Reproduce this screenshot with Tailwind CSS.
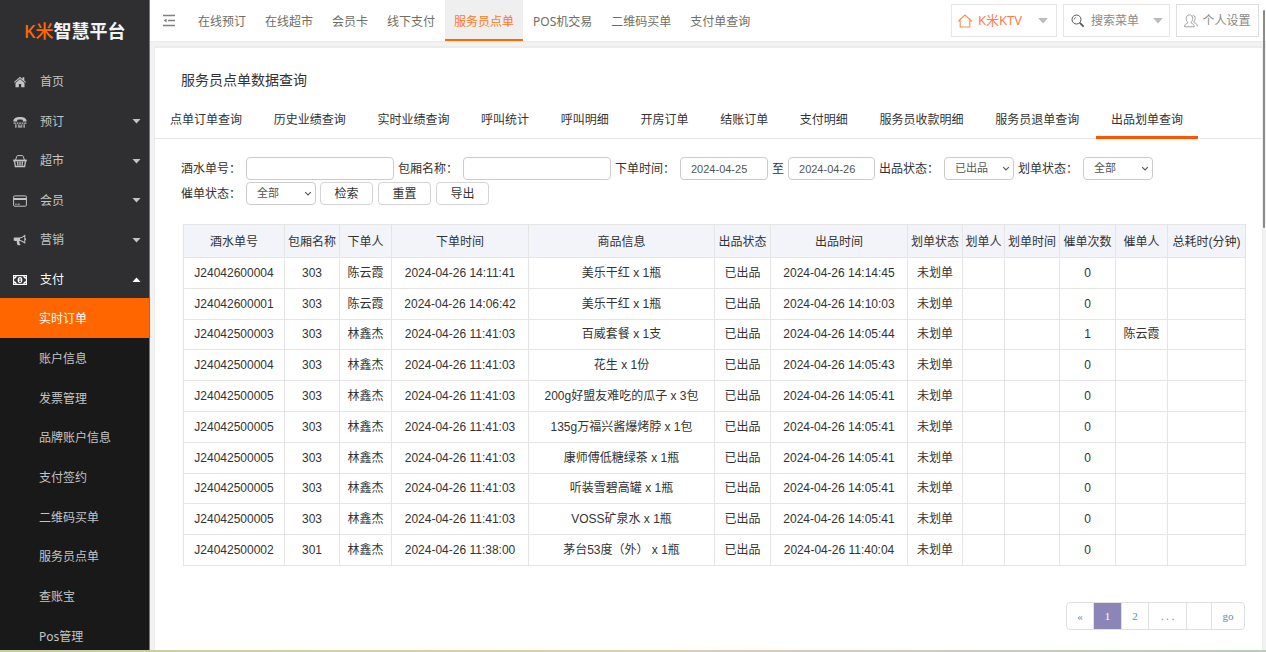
<!DOCTYPE html>
<html lang="zh-CN">
<head>
<meta charset="utf-8">
<title>K米智慧平台</title>
<script src="https://cdn.jsdelivr.net/npm/@tailwindcss/browser@4"></script>
</head>
<body class="flex h-screen flex-col overflow-hidden bg-[#f2f2f2] font-['Noto_Sans','Noto_Sans_CJK_SC',sans-serif] text-xs text-[#333]">
<svg class="hidden" aria-hidden="true">
  <symbol id="down" viewBox="0 0 8 5"><path d="M0 0h8L4 4.6z" fill="currentColor"/></symbol>
  <symbol id="chev" viewBox="0 0 8 6"><path d="M1.2 1.2L4 4l2.800-2.800" fill="none" stroke="#555" stroke-width="1.100"/></symbol>
</svg>
<div class="flex min-h-0 flex-1">
  <aside class="flex w-[150px] shrink-0 flex-col overflow-hidden border-r border-[#777] bg-[#2f2f31] text-[#c4c4c4]">
    <h1 class="flex h-[61px] shrink-0 items-center pl-6 text-lg font-bold text-[#f4f4f4]"><span class="font-medium text-[#ff6a00]">K米</span>智慧平台</h1>
    <nav class="shrink-0">
      <div class="grid h-[237px] grid-rows-6">
        <a href="#" class="flex items-center pt-[3px] pr-2 pl-[13px]"><svg class="mr-[13px] h-3.5 w-3.5" viewBox="0 0 14 14" fill="currentColor"><path d="M7 1.800L1 7l.7.8L7 3.300l5.300 4.500.7-.8-1.700-1.500V2.300H9.500v1.600z"/><path d="M2.500 7.900L7 4.100l4.500 3.800v4.300H8.200V9H5.800v3.200H2.500z"/></svg>首页</a>
        <a href="#" class="flex items-center pt-[3px] pr-2 pl-[13px]"><svg class="mr-[13px] h-3.5 w-3.5" viewBox="0 0 14 14" fill="currentColor"><path d="M.4 6.600C.2 3.200 3.300 1.900 7 1.900s6.800 1.300 6.600 4.700H9.800V5c-1.500-.6-4.100-.6-5.600 0v1.600z"/><path d="M.6 7.600h2.200v1.200H.6zM3.700 7.600h1.700v1.200H3.700zM6.200 7.600h1.700v1.200H6.200zM8.700 7.600h1.700v1.200H8.700zM11.200 7.600h2.200v1.200h-2.200zM2 9.500h1.700v1.200H2zM4.900 9.500h1.700v1.200H4.900zM7.600 9.500h1.700v1.200H7.600zM10.300 9.500H12v1.200h-1.700zM2 11.300h1.700v1.200H2zM4.900 11.300h4.400v1.200H4.900zM10.300 11.300H12v1.200h-1.700z"/></svg>预订<svg class="ml-auto h-[5px] w-[9px]"><use href="#down"/></svg></a>
        <a href="#" class="flex items-center pt-[3px] pr-2 pl-[13px]"><svg class="mr-[13px] h-3.5 w-3.5" viewBox="0 0 14 14" fill="none" stroke="currentColor"><path d="M2.600 6l1.100-3.600q.3-.8 1.200-.8h4.200q.9 0 1.200.8L11.400 6" /><path d="M.2 6.500h13.600" stroke-width="1.800"/><path d="M1.500 7l.9 5.500h9.200l.9-5.500M4.600 7.500l.3 4M7 7.500v4M9.400 7.500l-.3 4" stroke-width="1.300"/></svg>超市<svg class="ml-auto h-[5px] w-[9px]"><use href="#down"/></svg></a>
        <a href="#" class="flex items-center pt-[3px] pr-2 pl-[13px]"><svg class="mr-[13px] h-3.5 w-3.5" viewBox="0 0 14 14" fill="none" stroke="currentColor"><rect x=".6" y="1.900" width="12.800" height="10.300" rx="1"/><path d="M.6 5h12.800" stroke-width="2"/><path d="M2.200 10.200h1.500M4.500 10.200h2.300"/></svg>会员<svg class="ml-auto h-[5px] w-[9px]"><use href="#down"/></svg></a>
        <a href="#" class="flex items-center pt-[3px] pr-2 pl-[13px]"><svg class="mr-[13px] h-3.5 w-3.5" viewBox="0 0 14 14" fill="currentColor"><path fill-rule="evenodd" d="M1.700 4.500H6c2.200 0 4.200-1.200 5.800-2.700h.5v3.400c1.100.2 1.100 1.800 0 2v3.400h-.5C10.200 9.200 8.500 8.200 6.500 7.900c-.5.8-.1 1.400.2 1.900-.5.7.2 1.200.9 1.700-.7 1.100-2.700 1-3.200.3C4.100 10.600 3.500 9.300 3.900 7.900H1.700C.9 7.900.7 7.500.7 7V5.500c0-.6.4-1 1-1zM11.300 3.400C9.900 4.500 8.400 5.200 7 5.400v1.700c1.500.2 3 .9 4.300 2z"/></svg>营销<svg class="ml-auto h-[5px] w-[9px]"><use href="#down"/></svg></a>
        <a href="#" class="flex items-center pt-[3px] pr-2 pl-[13px] text-white"><svg class="mr-[13px] h-3.5 w-3.5" viewBox="0 0 14 14" fill="none" stroke="currentColor"><rect x=".6" y="2.600" width="12.800" height="8.800" stroke-width="1.200"/><path d="M1 5q2 0 2-2M13 5q-2 0-2-2M1 9q2 0 2 2M13 9q-2 0-2 2" stroke-width="1.300"/><ellipse cx="7" cy="7" rx="2.400" ry="2.900" fill="currentColor" stroke="none"/><path d="M6.300 5.900l.8-.4v2.700M6.100 8.500h2" stroke="#2f2f31" stroke-width=".8"/></svg>支付<svg class="ml-auto h-[5px] w-[9px] rotate-180"><use href="#down"/></svg></a>
      </div>
      <div class="grid h-[357px] grid-rows-9 bg-[#19191a]">
        <a href="#" class="flex items-center bg-[#ff6600] pt-[3px] pl-[39px] text-white">实时订单</a>
        <a href="#" class="flex items-center pt-[3px] pl-[39px]">账户信息</a>
        <a href="#" class="flex items-center pt-[3px] pl-[39px]">发票管理</a>
        <a href="#" class="flex items-center pt-[3px] pl-[39px]">品牌账户信息</a>
        <a href="#" class="flex items-center pt-[3px] pl-[39px]">支付签约</a>
        <a href="#" class="flex items-center pt-[3px] pl-[39px]">二维码买单</a>
        <a href="#" class="flex items-center pt-[3px] pl-[39px]">服务员点单</a>
        <a href="#" class="flex items-center pt-[3px] pl-[39px]">查账宝</a>
        <a href="#" class="flex items-center pt-[3px] pl-[39px]">Pos管理</a>
      </div>
    </nav>
  </aside>

  <div class="flex min-w-0 flex-1 flex-col">
    <header class="flex h-[42px] shrink-0 border-b border-[#eaeaea] bg-white pr-[7px] text-[#6e6e62]">
      <button class="w-[39px] pl-3" aria-label="收起菜单"><svg class="h-3.5 w-3.5" viewBox="0 0 14 14" fill="none" stroke="#808080" stroke-width="1.300"><path d="M1 1.500h12M6 6.500h7M1 11.500h12"/><path d="M4.600 4.500L1.600 6.500l3 2z" fill="#808080" stroke="none"/></svg></button>
      <nav class="flex h-[41px] gap-px leading-[43px] whitespace-nowrap">
        <a href="#" class="px-[9px]">在线预订</a>
        <a href="#" class="px-[9px]">在线超市</a>
        <a href="#" class="px-[9px]">会员卡</a>
        <a href="#" class="px-[9px]">线下支付</a>
        <a href="#" class="h-[41px] border-b-2 border-[#ff6600] bg-[#efefef] px-[9px] text-[#ff7a1a]">服务员点单</a>
        <a href="#" class="px-[9px]">POS机交易</a>
        <a href="#" class="px-[9px]">二维码买单</a>
        <a href="#" class="px-[9px]">支付单查询</a>
      </nav>
      <div class="ml-auto flex h-[33px] gap-1.5 self-center whitespace-nowrap text-[#8a8a8a]">
        <button class="flex w-[106px] items-center border border-[#e6e6e6] pr-2 pl-1.5 text-[#ff7c50]"><svg class="mr-1.5 h-3.5 w-3.5" viewBox="0 0 14 14" fill="none" stroke="#ff8c4a" stroke-width="1.100"><path d="M.6 7L7 1l6.400 6h-1.600v6H2.200V7z"/></svg><span class="text-[13px]">K米KTV</span><svg class="ml-auto h-1.5 w-2.5 text-[#bbb]"><use href="#down"/></svg></button>
        <label class="flex w-[107px] items-center border border-[#e6e6e6] pr-1.5 pl-[7px]"><svg class="mr-1.5 h-3.5 w-3.5 shrink-0" viewBox="0 0 14 14" fill="none" stroke="#555"><circle cx="5.500" cy="5.500" r="4.500"/><path d="M3.200 5.500q.2-2 2-2.300" stroke-width=".7"/><path d="M8.900 8.900l3.700 3.700" stroke-width="1.700"/></svg><input class="w-0 min-w-0 flex-1 outline-none placeholder:text-[#8a8a8a]" placeholder="搜索菜单" aria-label="搜索菜单"><svg class="ml-2 h-1.5 w-2.5 text-[#bbb]"><use href="#down"/></svg></label>
        <button class="flex w-[83px] items-center justify-center gap-1 border border-[#dedede]"><svg class="h-3.5 w-3.5" viewBox="0 0 14 14" fill="none" stroke="#999" stroke-width=".9"><path d="M.5 12.800c0-2.400 1.400-3 3.100-3.700V8.200C2.600 7.200 2.200 5.800 2.200 4.300 2.200 2.300 3.500.8 5.400.8s3.200 1.500 3.200 3.500c0 1.500-.4 2.900-1.400 3.900v.9c1.700.7 3.100 1.300 3.100 3.700z"/><path d="M8.500 1.200c1.700 0 2.700 1.200 2.700 3 0 1.300-.4 2.500-1.300 3.500v.8c1.800.7 3.500 1.300 3.500 3.900"/></svg>个人设置</button>
      </div>
    </header>

    <main class="mt-1 mr-[3px] ml-1 min-h-0 flex-1 border-t-2 border-r border-l border-[#ececec] bg-white">
      <h2 class="pt-5 pl-[26px] text-sm leading-6">服务员点单数据查询</h2>
      <nav class="mt-2 flex h-[39px] justify-between border-b border-[#e6e6e6] pr-16 leading-10 whitespace-nowrap">
        <a href="#" class="px-[15px]">点单订单查询</a>
        <a href="#" class="px-[15px]">历史业绩查询</a>
        <a href="#" class="px-[15px]">实时业绩查询</a>
        <a href="#" class="px-[15px]">呼叫统计</a>
        <a href="#" class="px-[15px]">呼叫明细</a>
        <a href="#" class="px-[15px]">开房订单</a>
        <a href="#" class="px-[15px]">结账订单</a>
        <a href="#" class="px-[15px]">支付明细</a>
        <a href="#" class="px-[15px]">服务员收款明细</a>
        <a href="#" class="px-[15px]">服务员退单查询</a>
        <a href="#" class="h-[39px] border-b-[3px] border-[#ff5500] px-[15px]">出品划单查询</a>
      </nav>
      <form class="mt-[18px] flex flex-wrap items-center gap-x-1 gap-y-px pl-[26px] font-['Liberation_Sans','Noto_Sans_CJK_SC',sans-serif] whitespace-nowrap">
        <label for="no" class="w-[61px]">酒水单号：</label>
        <input id="no" class="h-[23px] w-[148px] rounded border border-[#ccc] px-2">
        <label for="room" class="w-[61px]">包厢名称：</label>
        <input id="room" class="h-[23px] w-[148px] rounded border border-[#ccc] px-2">
        <label for="from" class="w-[61px]">下单时间：</label>
        <input id="from" value="2024-04-25" class="h-[23px] w-[88px] rounded border border-[#ccc] px-2.5 text-[11px] text-[#555]">
        <label for="to">至</label>
        <input id="to" value="2024-04-26" class="h-[23px] w-[87px] rounded border border-[#ccc] px-2.5 text-[11px] text-[#555]">
        <label for="out" class="w-[61px]">出品状态：</label>
        <span class="grid h-[23px] w-[70px] items-center"><select id="out" class="col-start-1 row-start-1 h-full appearance-none rounded border border-[#ccc] pl-2.5 text-[11px] text-[#555]"><option>已出品</option></select><svg class="pointer-events-none col-start-1 row-start-1 mr-1 h-1.5 w-2 justify-self-end"><use href="#chev"/></svg></span>
        <label for="mark" class="w-[61px]">划单状态：</label>
        <span class="grid h-[23px] w-[70px] items-center"><select id="mark" class="col-start-1 row-start-1 h-full appearance-none rounded border border-[#ccc] pl-2.5 text-[11px] text-[#555]"><option>全部</option></select><svg class="pointer-events-none col-start-1 row-start-1 mr-1 h-1.5 w-2 justify-self-end"><use href="#chev"/></svg></span>
        <span class="basis-full"></span>
        <label for="urge" class="w-[61px]">催单状态：</label>
        <span class="grid h-[23px] w-[70px] items-center"><select id="urge" class="col-start-1 row-start-1 h-full appearance-none rounded border border-[#ccc] pl-2.5 text-[11px] text-[#555]"><option>全部</option></select><svg class="pointer-events-none col-start-1 row-start-1 mr-1 h-1.5 w-2 justify-self-end"><use href="#chev"/></svg></span>
        <button type="button" class="mr-px h-[23px] w-[53px] rounded border border-[#d4d4d4]">检索</button>
        <button type="button" class="mr-px h-[23px] w-[53px] rounded border border-[#d4d4d4]">重置</button>
        <button type="button" class="h-[23px] w-[53px] rounded border border-[#d4d4d4]">导出</button>
      </form>
      <div class="mt-[19px] pr-[17px] pl-7">
        <table class="h-[342px] w-full table-fixed border-collapse text-center font-['Liberation_Sans','Noto_Sans_CJK_SC',sans-serif] whitespace-nowrap [&_td]:border [&_td]:border-[#e5e5e5] [&_th]:border [&_th]:border-[#e5e5e5] [&_th]:pt-0.5 [&_th]:font-normal">
          <colgroup><col class="w-[101px]"><col class="w-[55px]"><col class="w-[52px]"><col class="w-[137px]"><col class="w-[186px]"><col class="w-[56px]"><col class="w-[137px]"><col class="w-[55px]"><col class="w-[42px]"><col class="w-[55px]"><col class="w-[56px]"><col class="w-[52px]"><col class="w-[78px]"></colgroup>
          <thead class="bg-[#f3f4f9]"><tr class="h-[33px]"><th>酒水单号</th><th>包厢名称</th><th>下单人</th><th>下单时间</th><th>商品信息</th><th>出品状态</th><th>出品时间</th><th>划单状态</th><th>划单人</th><th>划单时间</th><th>催单次数</th><th>催单人</th><th>总耗时(分钟)</th></tr></thead>
          <tbody>
            <tr><td>J24042600004</td><td>303</td><td>陈云霞</td><td>2024-04-26 14:11:41</td><td>美乐干红 x 1瓶</td><td>已出品</td><td>2024-04-26 14:14:45</td><td>未划单</td><td></td><td></td><td>0</td><td></td><td></td></tr>
            <tr><td>J24042600001</td><td>303</td><td>陈云霞</td><td>2024-04-26 14:06:42</td><td>美乐干红 x 1瓶</td><td>已出品</td><td>2024-04-26 14:10:03</td><td>未划单</td><td></td><td></td><td>0</td><td></td><td></td></tr>
            <tr><td>J24042500003</td><td>303</td><td>林鑫杰</td><td>2024-04-26 11:41:03</td><td>百威套餐 x 1支</td><td>已出品</td><td>2024-04-26 14:05:44</td><td>未划单</td><td></td><td></td><td>1</td><td>陈云霞</td><td></td></tr>
            <tr><td>J24042500004</td><td>303</td><td>林鑫杰</td><td>2024-04-26 11:41:03</td><td>花生 x 1份</td><td>已出品</td><td>2024-04-26 14:05:43</td><td>未划单</td><td></td><td></td><td>0</td><td></td><td></td></tr>
            <tr><td>J24042500005</td><td>303</td><td>林鑫杰</td><td>2024-04-26 11:41:03</td><td>200g好盟友难吃的瓜子 x 3包</td><td>已出品</td><td>2024-04-26 14:05:41</td><td>未划单</td><td></td><td></td><td>0</td><td></td><td></td></tr>
            <tr><td>J24042500005</td><td>303</td><td>林鑫杰</td><td>2024-04-26 11:41:03</td><td>135g万福兴酱爆烤脖 x 1包</td><td>已出品</td><td>2024-04-26 14:05:41</td><td>未划单</td><td></td><td></td><td>0</td><td></td><td></td></tr>
            <tr><td>J24042500005</td><td>303</td><td>林鑫杰</td><td>2024-04-26 11:41:03</td><td>康师傅低糖绿茶 x 1瓶</td><td>已出品</td><td>2024-04-26 14:05:41</td><td>未划单</td><td></td><td></td><td>0</td><td></td><td></td></tr>
            <tr><td>J24042500005</td><td>303</td><td>林鑫杰</td><td>2024-04-26 11:41:03</td><td>听装雪碧高罐 x 1瓶</td><td>已出品</td><td>2024-04-26 14:05:41</td><td>未划单</td><td></td><td></td><td>0</td><td></td><td></td></tr>
            <tr><td>J24042500005</td><td>303</td><td>林鑫杰</td><td>2024-04-26 11:41:03</td><td>VOSS矿泉水 x 1瓶</td><td>已出品</td><td>2024-04-26 14:05:41</td><td>未划单</td><td></td><td></td><td>0</td><td></td><td></td></tr>
            <tr><td>J24042500002</td><td>301</td><td>林鑫杰</td><td>2024-04-26 11:38:00</td><td>茅台53度（外） x 1瓶</td><td>已出品</td><td>2024-04-26 11:40:04</td><td>未划单</td><td></td><td></td><td>0</td><td></td><td></td></tr>
          </tbody>
        </table>
      </div>
      <nav class="mt-9 mr-[17px] ml-auto flex h-7 w-max divide-x divide-[#e0e0e0] overflow-hidden rounded border border-[#e0e0e0] text-center font-['Liberation_Serif',serif] text-[11px] leading-[27px] text-[#5590c4]" aria-label="分页">
        <a href="#" class="w-[27px]">«</a>
        <a href="#" class="w-7 bg-[#8c86b8] text-white">1</a>
        <a href="#" class="w-[27px]">2</a>
        <span class="w-[38px] font-['Liberation_Mono',monospace] text-[9px] leading-[30px]">...</span>
        <input aria-label="页码" class="w-[25px] text-center">
        <a href="#" class="w-8">go</a>
      </nav>
    </main>
  </div>
  <div class="fixed top-[10px] right-px h-[218px] w-[2px] rounded bg-[#8a8a8a]"></div>
</div>
<div class="h-[2px] shrink-0 bg-linear-to-r from-[#c3cf9d] via-[#dfceb0] to-[#b9cbbb]"></div>
</body>
</html>
